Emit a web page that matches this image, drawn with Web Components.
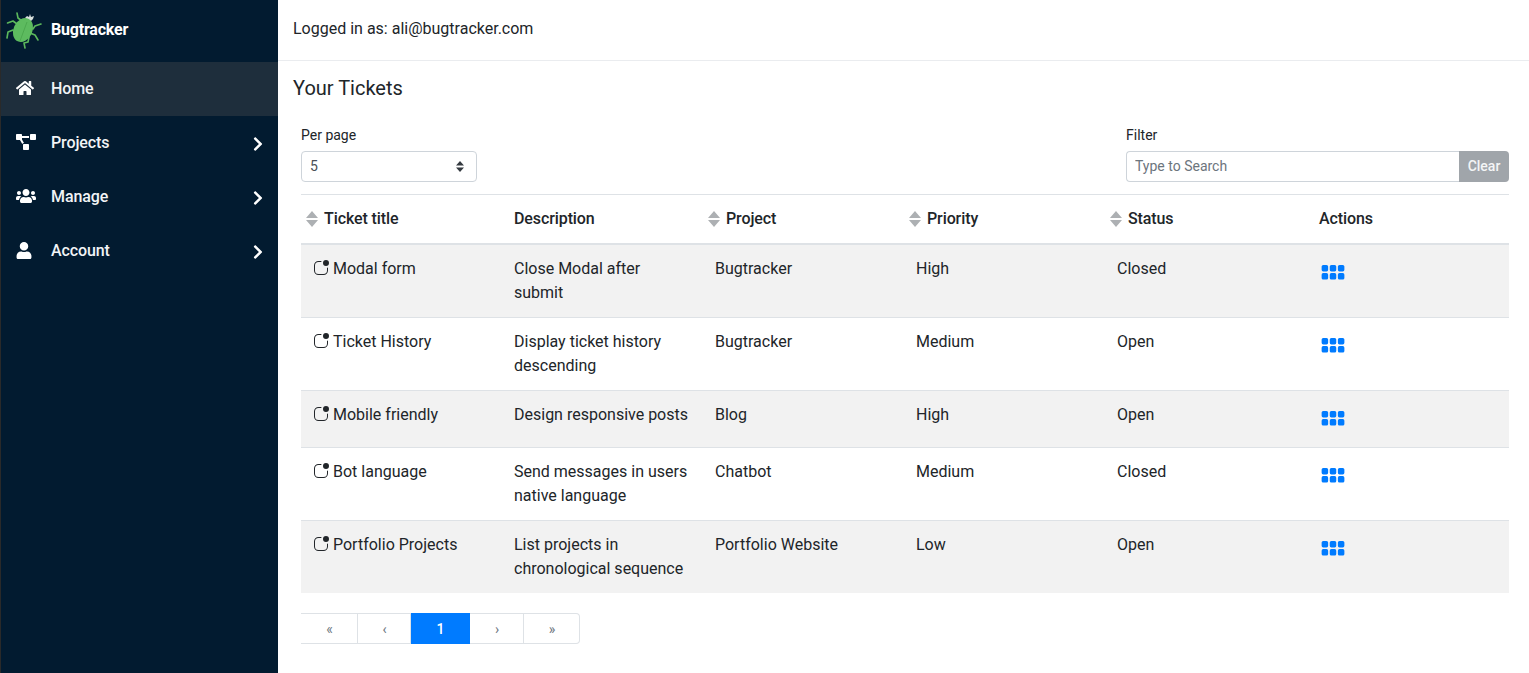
<!DOCTYPE html>
<html>
<head>
<meta charset="utf-8">
<title>Bugtracker</title>
<style>
    html, body { margin: 0; height: 100%; }
    body { font-family: Roboto, "Liberation Sans", sans-serif; color: #212529; overflow: hidden; }
</style>
</head>
<body>
<bug-app>
    <bug-sidebar slot="sidebar">
        <nav-item icon="home" active>Home</nav-item>
        <nav-item icon="projects" arrow>Projects</nav-item>
        <nav-item icon="users" arrow>Manage</nav-item>
        <nav-item icon="user" arrow>Account</nav-item>
    </bug-sidebar>
    <top-bar slot="top">Logged in as: ali@bugtracker.com</top-bar>
    <ticket-list></ticket-list>
</bug-app>

<script>
const ICONS = {
    home: ['0 0 576 512', 'M280.37 148.26L96 300.11V464a16 16 0 0 0 16 16l112.06-.29a16 16 0 0 0 15.92-16V368a16 16 0 0 1 16-16h64a16 16 0 0 1 16 16v95.64a16 16 0 0 0 16 16.05L464 480a16 16 0 0 0 16-16V300L295.67 148.26a12.19 12.19 0 0 0-15.3 0zM571.6 251.47L488 182.56V44.05a12 12 0 0 0-12-12h-56a12 12 0 0 0-12 12v72.61L318.47 43a48 48 0 0 0-61 0L4.34 251.47a12 12 0 0 0-1.6 16.9l25.5 31A12 12 0 0 0 45.15 301l235.22-193.74a12.19 12.19 0 0 1 15.3 0L530.9 301a12 12 0 0 0 16.9-1.6l25.5-31a12 12 0 0 0-1.7-16.93z'],
    projects: ['0 0 640 512', 'M384 320H256c-17.67 0-32 14.33-32 32v128c0 17.67 14.33 32 32 32h128c17.67 0 32-14.33 32-32V352c0-17.67-14.33-32-32-32zM192 32c0-17.67-14.33-32-32-32H32C14.33 0 0 14.33 0 32v128c0 17.67 14.33 32 32 32h95.72l73.16 128.04C211.98 300.98 232.4 288 256 288h.28L192 175.51V128h224V64H192V32zM608 0H480c-17.67 0-32 14.33-32 32v128c0 17.67 14.33 32 32 32h128c17.67 0 32-14.33 32-32V32c0-17.67-14.33-32-32-32z'],
    users: ['0 0 640 512', 'M96 224c35.3 0 64-28.7 64-64s-28.7-64-64-64-64 28.7-64 64 28.7 64 64 64zm448 0c35.3 0 64-28.7 64-64s-28.7-64-64-64-64 28.7-64 64 28.7 64 64 64zm32 32h-64c-17.6 0-33.5 7.1-45.1 18.6 40.3 22.1 68.9 62 75.1 109.4h66c17.7 0 32-14.3 32-32v-32c0-35.3-28.7-64-64-64zm-256 0c61.9 0 112-50.1 112-112S381.9 32 320 32 208 82.1 208 144s50.1 112 112 112zm76.8 32h-8.3c-20.8 10-43.9 16-68.5 16s-47.6-6-68.5-16h-8.3C179.6 288 128 339.6 128 403.2V432c0 26.5 21.5 48 48 48h288c26.5 0 48-21.5 48-48v-28.8c0-63.6-51.6-115.2-115.2-115.2zm-223.7-13.4C161.5 263.1 145.6 256 128 256H64c-35.3 0-64 28.7-64 64v32c0 17.7 14.3 32 32 32h65.9c6.3-47.4 34.9-87.3 75.2-109.4z'],
    user: ['0 0 448 512', 'M224 256c70.7 0 128-57.3 128-128S294.7 0 224 0 96 57.3 96 128s57.3 128 128 128zm89.6 32h-16.7c-22.2 10.2-46.9 16-72.9 16s-50.6-5.8-72.9-16h-16.7C60.2 288 0 348.2 0 422.4V464c0 26.5 21.5 48 48 48h352c26.5 0 48-21.5 48-48v-41.6c0-74.2-60.2-134.4-134.4-134.4z'],
    chevron: ['0 0 320 512', 'M285.476 272.971L91.132 467.314c-9.373 9.373-24.569 9.373-33.941 0l-22.667-22.667c-9.357-9.357-9.375-24.522-.04-33.901L188.505 256 34.484 101.255c-9.335-9.379-9.317-24.544.04-33.901l22.667-22.667c9.373-9.373 24.569-9.373 33.941 0L285.475 239.03c9.373 9.372 9.373 24.568.001 33.941z'],
    indicator: ['0 0 16 16', 'M5.5 2A3.5 3.5 0 0 0 2 5.5v5A3.5 3.5 0 0 0 5.5 14h5a3.5 3.5 0 0 0 3.5-3.5V8a.5.5 0 0 1 1 0v2.5a4.5 4.5 0 0 1-4.5 4.5h-5A4.5 4.5 0 0 1 1 10.5v-5A4.5 4.5 0 0 1 5.5 1H8a.5.5 0 0 1 0 1H5.5zM16 3a3 3 0 1 1-6 0 3 3 0 0 1 6 0z'],
    grid: ['0 0 16 16', 'M1 4a1 1 0 0 1 1-1h2a1 1 0 0 1 1 1v2a1 1 0 0 1-1 1H2a1 1 0 0 1-1-1V4zm5 0a1 1 0 0 1 1-1h2a1 1 0 0 1 1 1v2a1 1 0 0 1-1 1H7a1 1 0 0 1-1-1V4zm5 0a1 1 0 0 1 1-1h2a1 1 0 0 1 1 1v2a1 1 0 0 1-1 1h-2a1 1 0 0 1-1-1V4zM1 9a1 1 0 0 1 1-1h2a1 1 0 0 1 1 1v2a1 1 0 0 1-1 1H2a1 1 0 0 1-1-1V9zm5 0a1 1 0 0 1 1-1h2a1 1 0 0 1 1 1v2a1 1 0 0 1-1 1H7a1 1 0 0 1-1-1V9zm5 0a1 1 0 0 1 1-1h2a1 1 0 0 1 1 1v2a1 1 0 0 1-1 1h-2a1 1 0 0 1-1-1V9z']
};

function icon(name, w, h) {
    const [box, d] = ICONS[name];
    return `<svg width="${w}" height="${h}" viewBox="${box}" fill="currentColor"><path d="${d}"/></svg>`;
}

class BugApp extends HTMLElement {
    connectedCallback() {
        this.attachShadow({ mode: 'open' });
        this.shadowRoot.innerHTML = `
            <style>
                :host { display: flex; height: 100vh; background: #fff; }
                .side { width: 278px; flex: none; }
                .main { flex: 1; min-width: 0; display: flex; flex-direction: column; }
            </style>
            <div class="side"><slot name="sidebar"></slot></div>
            <div class="main">
                <slot name="top"></slot>
                <slot></slot>
            </div>
        `;
    }
}

class BugSidebar extends HTMLElement {
    connectedCallback() {
        this.attachShadow({ mode: 'open' });
        this.shadowRoot.innerHTML = `
            <style>
                :host { display: block; height: 100%; background: #021b30; border-left: 1px solid #2a2a2a; box-sizing: border-box; color: #fff; }
                .brand { height: 62px; display: flex; align-items: center; gap: 9px; padding-left: 4px; font-size: 16px; font-weight: 700; letter-spacing: -0.2px; }
                .brand span { position: relative; top: -2px; }
                svg { display: block; margin-top: -1px; }
            </style>
            <div class="brand">
                <svg width="37" height="37" viewBox="0 0 37 37">
                    <g fill="none" stroke="#5cb85c" stroke-width="1.6" stroke-linejoin="round" stroke-linecap="round">
                        <path d="M12 1 L13 6 L17 9"/>
                        <path d="M2.5 11 L8 9 L12 12"/>
                        <path d="M2 26 L3 20 L8 18"/>
                        <path d="M20 36 L19 31 L23 30 L24 25"/>
                        <path d="M36 12 L30 14 L28 17"/>
                        <path d="M33 28 L30 23 L25 21"/>
                    </g>
                    <path d="M20 6 L22 4 L24 5 L25 2 L26 5 L29 4 L28 7 L26 9 L22 8 Z" fill="#d8e0dc"/>
                    <ellipse cx="18" cy="18" rx="9.5" ry="12.5" transform="rotate(25 18 18)" fill="#5dbb5f"/>
                    <path d="M22 10 L15 29" fill="none" stroke="#47a34a" stroke-width="0.8"/>
                </svg>
                <span>Bugtracker</span>
            </div>
            <slot></slot>
        `;
    }
}

class NavItem extends HTMLElement {
    connectedCallback() {
        this.attachShadow({ mode: 'open' });
        const name = this.getAttribute('icon');
        const sizes = { home: [18, 16], projects: [20, 16], users: [20, 16], user: [16, 17] };
        const [w, h] = sizes[name];
        this.shadowRoot.innerHTML = `
            <style>
                :host { display: flex; align-items: center; box-sizing: border-box; height: 54px; padding-bottom: 2px; font-size: 16px; font-weight: 500; letter-spacing: -0.1px; color: #f2f4f6; }
                :host([active]) { background: #1e2e3c; }
                .ic { width: 20px; margin-left: 15px; margin-right: 15px; display: flex; color: #fff; }
                .label { flex: 1; }
                .arrow { margin-right: 15px; color: #fff; display: flex; position: relative; top: 2px; }
                svg { display: block; }
            </style>
            <span class="ic">${icon(name, w, h)}</span>
            <span class="label"><slot></slot></span>
            ${this.hasAttribute('arrow') ? `<span class="arrow">${icon('chevron', 10, 16)}</span>` : ''}
        `;
    }
}

class TopBar extends HTMLElement {
    connectedCallback() {
        this.attachShadow({ mode: 'open' });
        this.shadowRoot.innerHTML = `
            <style>
                :host { display: flex; align-items: center; flex: none; height: 57px; padding: 0 15px 3px; font-size: 16px; color: #212529; border-bottom: 1px solid #eaecef; }
            </style>
            <slot></slot>
        `;
    }
}

class FilterBar extends HTMLElement {
    connectedCallback() {
        this.attachShadow({ mode: 'open' });
        this.shadowRoot.innerHTML = `
            <style>
                :host { display: flex; justify-content: space-between; margin: 0 0 12px; font-size: 14px; }
                label { display: block; line-height: 21px; padding-top: 1px; margin-bottom: 5px; color: #212529; }
                .per { width: 176px; }
                .select { height: 31px; box-sizing: border-box; border: 1px solid #ced4da; border-radius: 4px; display: flex; align-items: center; justify-content: space-between; padding: 0 12px 0 8px; color: #495057; }
                .select span { padding-bottom: 2px; }
                .filter { width: 383px; }
                .group { display: flex; height: 31px; }
                input { flex: 1; min-width: 0; box-sizing: border-box; height: 31px; border: 1px solid #ced4da; border-right: 0; border-radius: 4px 0 0 4px; padding: 0 8px 2px; font: inherit; outline: 0; }
                input::placeholder { color: #6c757d; opacity: 1; }
                button { width: 50px; border: 0; padding: 0 0 2px; background: #a0a5aa; color: #f4f5f6; font: 500 14px Roboto, sans-serif; border-radius: 0 4px 4px 0; }
            </style>
            <div class="per">
                <label>Per page</label>
                <div class="select">
                    <span>5</span>
                    <svg width="8" height="11" viewBox="0 0 8 11" fill="#343a40"><path d="M4 0L8 4.5H0zM4 11L0 6.5H8z"/></svg>
                </div>
            </div>
            <div class="filter">
                <label>Filter</label>
                <div class="group">
                    <input type="text" placeholder="Type to Search">
                    <button>Clear</button>
                </div>
            </div>
        `;
    }
}

class PageNav extends HTMLElement {
    connectedCallback() {
        this.attachShadow({ mode: 'open' });
        const pages = [['«', 57], ['‹', 53], ['1', 59], ['›', 54], ['»', 56]];
        this.shadowRoot.innerHTML = `
            <style>
                :host { display: flex; margin-top: 20px; }
                a { height: 31px; box-sizing: border-box; display: flex; align-items: center; justify-content: center; padding-left: 1px; border: 1px solid #dee2e6; border-left-width: 0; font-size: 14px; color: #6c757d; }
                a:first-child { border-left-width: 1px; border-radius: 4px 0 0 4px; }
                a:last-child { border-radius: 0 4px 4px 0; }
                a.on { background: #007bff; border-color: #007bff; color: #fff; font-weight: 500; }
            </style>
            ${pages.map(([t, w]) => `<a class="${t === '1' ? 'on' : ''}" style="width:${w}px">${t}</a>`).join('')}
        `;
    }
}

class TicketList extends HTMLElement {
    connectedCallback() {
        this.attachShadow({ mode: 'open' });
        const tickets = [
            ['Modal form', 'Close Modal after submit', 'Bugtracker', 'High', 'Closed'],
            ['Ticket History', 'Display ticket history descending', 'Bugtracker', 'Medium', 'Open'],
            ['Mobile friendly', 'Design responsive posts', 'Blog', 'High', 'Open'],
            ['Bot language', 'Send messages in users native language', 'Chatbot', 'Medium', 'Closed'],
            ['Portfolio Projects', 'List projects in chronological sequence', 'Portfolio Website', 'Low', 'Open']
        ];
        const sort = `<svg class="sort" width="12" height="16" viewBox="0 0 12 16" fill="#adb0b3"><path d="M6 0L12 7H0zM6 16L0 9H12z"/></svg>`;
        const th = (t, s) => `<th class="${s ? 'sortable' : ''}">${s ? sort : ''}${t}</th>`;
        this.shadowRoot.innerHTML = `
            <style>
                :host { display: block; padding: 0 20px 0 15px; }
                h2 { margin: 0; font-size: 20px; font-weight: 400; line-height: 24px; padding: 15px 0 24px; color: #212529; }
                .wrap { margin-left: 8px; }
                table { width: 100%; table-layout: fixed; border-collapse: collapse; font-size: 16px; line-height: 24px; }
                th, td { padding: 12px; text-align: left; vertical-align: top; }
                th { font-weight: 500; letter-spacing: -0.1px; border-top: 1px solid #dee2e6; border-bottom: 2px solid #dee2e6; position: relative; }
                th.sortable { padding-left: 23px; }
                .sort { position: absolute; left: 5px; top: 16px; }
                td { border-top: 1px solid #dee2e6; }
                tbody tr:nth-child(odd) { background: #f2f2f2; }
                .ind { display: inline-block; vertical-align: -2px; margin-right: 4px; color: #212529; }
                .ind svg { display: block; }
                .act { display: block; height: 29px; color: #007bff; padding: 3px 0 0 1px; }
                .act svg { display: block; }
            </style>
            <h2>Your Tickets</h2>
            <div class="wrap">
                <filter-bar></filter-bar>
                <table>
                    <colgroup>
                        <col style="width:201px"><col style="width:201px"><col style="width:201px">
                        <col style="width:201px"><col style="width:202px"><col style="width:202px">
                    </colgroup>
                    <thead>
                        <tr>
                            ${th('Ticket title', true)}
                            ${th('Description')}
                            ${th('Project', true)}
                            ${th('Priority', true)}
                            ${th('Status', true)}
                            ${th('Actions')}
                        </tr>
                    </thead>
                    <tbody>
                        ${tickets.map(t => `
                            <tr>
                                <td><span class="ind">${icon('indicator', 16, 16)}</span>${t[0]}</td>
                                <td>${t[1]}</td>
                                <td>${t[2]}</td>
                                <td>${t[3]}</td>
                                <td>${t[4]}</td>
                                <td><span class="act">${icon('grid', 26, 26)}</span></td>
                            </tr>
                        `).join('')}
                    </tbody>
                </table>
                <page-nav></page-nav>
            </div>
        `;
    }
}

customElements.define('bug-app', BugApp);
customElements.define('bug-sidebar', BugSidebar);
customElements.define('nav-item', NavItem);
customElements.define('top-bar', TopBar);
customElements.define('filter-bar', FilterBar);
customElements.define('page-nav', PageNav);
customElements.define('ticket-list', TicketList);
</script>
</body>
</html>
